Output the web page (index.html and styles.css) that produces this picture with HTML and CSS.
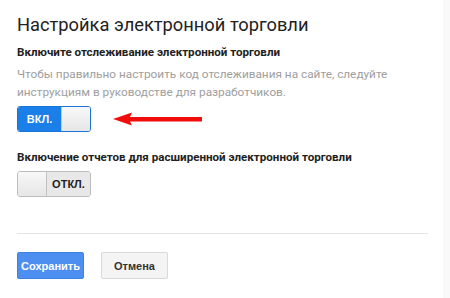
FILE: index.html
```html
<!DOCTYPE html>
<html lang="ru">
<head>
  <meta charset="UTF-8" />
  <title>Настройка электронной торговли</title>
  <link rel="stylesheet" href="styles.css">
</head>
<body>
  <div class="page">
    <h1>Настройка электронной торговли</h1>

    <!-- Ecommerce tracking -->
    <div class="setting">
      <h2>Включите отслеживание электронной торговли</h2>
      <p class="hint">Чтобы правильно настроить код отслеживания на сайте, следуйте инструкциям в руководстве для разработчиков.</p>
      <div class="toggle-row">
        <div class="toggle on">
          <span class="toggle-label">ВКЛ.</span>
          <span class="toggle-knob"></span>
        </div>
        <svg class="arrow" width="90" height="14" viewBox="0 0 90 14">
          <path d="M0 7 L19 0.5 L17 5 L89 5 L89 9.5 L17 9.5 L19 13.5 Z" fill="#f20d0d"/>
        </svg>
      </div>
    </div>

    <!-- Enhanced ecommerce -->
    <div class="setting">
      <h2>Включение отчетов для расширенной электронной торговли</h2>
      <div class="toggle-row">
        <div class="toggle off">
          <span class="toggle-knob"></span>
          <span class="toggle-label">ОТКЛ.</span>
        </div>
      </div>
    </div>

    <div class="actions">
      <button class="btn btn-primary" type="button">Сохранить</button>
      <button class="btn" type="button">Отмена</button>
    </div>
  </div>
  <div class="edge"></div>
</body>
</html>
```

FILE: styles.css
```css
body {
  margin: 0;
  background: #fff;
  font-family: Roboto, "Liberation Sans", Arial, sans-serif;
  color: #222;
  display: flex;
  min-height: 298px;
}
.page {
  flex: 1;
  padding: 13px 15px 0 17px;
}
.edge {
  width: 7px;
  background: #f9f9f9;
}
h1 {
  margin: 0 0 7px;
  font-size: 18.3px;
  font-weight: 400;
  line-height: 24px;
  color: #212121;
}
h2 {
  margin: 0;
  font-size: 11.6px;
  font-weight: 700;
  line-height: 16px;
  color: #212121;
}
.hint {
  margin: 5px 0 0;
  font-size: 11.8px;
  line-height: 18px;
  color: #9e9e9e;
  max-width: 390px;
}
.setting + .setting {
  margin-top: 17px;
}
.toggle-row {
  display: flex;
  align-items: center;
  gap: 22px;
  margin-top: 6px;
}
.hint + .toggle-row {
  margin-top: 5px;
}
.toggle {
  display: flex;
  width: 72px;
  height: 24px;
  border: 1px solid #bdbdbd;
  border-radius: 3px;
  overflow: hidden;
  font-family: "Liberation Sans", Arial, sans-serif;
  font-size: 11px;
  font-weight: 700;
}
.toggle-label {
  flex: 1;
  display: flex;
  align-items: center;
  justify-content: center;
}
.toggle-knob {
  width: 28px;
  background: linear-gradient(#f8f8f8, #e6e6e6);
}
.toggle.on {
  border-color: #1a73d9;
}
.toggle.on .toggle-label {
  background: #1a7fe8;
  color: #fff;
}
.toggle.on .toggle-knob {
  border-left: 1px solid #c8c8c8;
}
.toggle.off .toggle-label {
  background: #e8e8e8;
  color: #222;
}
.toggle.off .toggle-knob {
  border-right: 1px solid #c2c2c2;
}
.arrow {
  display: block;
}
.actions {
  border-top: 1px solid #e5e5e5;
  margin-top: 36px;
  padding-top: 18px;
  display: flex;
  gap: 17px;
}
.btn {
  width: 67px;
  height: 27px;
  padding: 0;
  border: 1px solid #d9d9d9;
  border-radius: 2px;
  background: #f4f4f4;
  color: #333;
  font-family: "Liberation Sans", Arial, sans-serif;
  font-size: 11px;
  font-weight: 700;
  cursor: pointer;
}
.btn-primary {
  background: #4d8ff0;
  border-color: #3f7fe6;
  color: #fff;
}
```
